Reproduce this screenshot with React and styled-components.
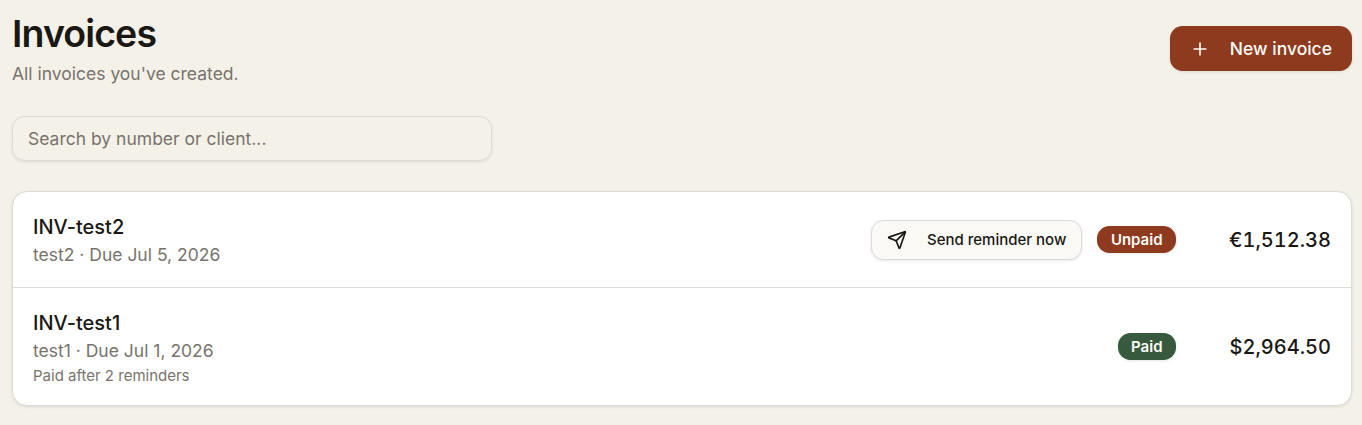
import React from 'react';
import styled, { createGlobalStyle } from 'styled-components';
import { Plus, Send } from 'lucide-react';

const theme = {
  background: '#f4f1e9',
  card: '#ffffff',
  border: '#dddbd6',
  text: '#1a1814',
  muted: '#78736c',
  rust: '#8e3a1f',
  green: '#375a3e',
};

const invoices = [
  {
    number: 'INV-test2',
    details: 'test2 · Due Jul 5, 2026',
    amount: '€1,512.38',
    paid: false,
  },
  {
    number: 'INV-test1',
    details: 'test1 · Due Jul 1, 2026',
    note: 'Paid after 2 reminders',
    amount: '$2,964.50',
    paid: true,
  },
];

const App = () => (
  <>
    <GlobalStyle />
    <Page>
      <Header>
        <div>
          <Title>Invoices</Title>
          <Subtitle>All invoices you've created.</Subtitle>
        </div>
        <PrimaryButton type="button">
          <Plus size={20} strokeWidth={2} />
          New invoice
        </PrimaryButton>
      </Header>
      <Search type="text" placeholder="Search by number or client..." />
      <List>
        {invoices.map((invoice) => (
          <Row key={invoice.number}>
            <div>
              <Number>{invoice.number}</Number>
              <Details>{invoice.details}</Details>
              {invoice.note && <Note>{invoice.note}</Note>}
            </div>
            <Actions>
              {!invoice.paid && (
                <ReminderButton type="button">
                  <Send size={20} strokeWidth={2} />
                  Send reminder now
                </ReminderButton>
              )}
              <Badge $paid={invoice.paid}>
                {invoice.paid ? 'Paid' : 'Unpaid'}
              </Badge>
              <Amount>{invoice.amount}</Amount>
            </Actions>
          </Row>
        ))}
      </List>
    </Page>
  </>
);

const GlobalStyle = createGlobalStyle`
  * {
    box-sizing: border-box;
  }
  body {
    margin: 0;
    background: ${theme.background};
    color: ${theme.text};
    font-family: Inter, sans-serif;
  }
  button, input {
    font-family: inherit;
  }
`;

const Page = styled.main`
  display: flex;
  flex-direction: column;
  gap: 30px;
  padding: 11px 10px 19px 12px;
`;

const Header = styled.header`
  display: flex;
  align-items: center;
  justify-content: space-between;
`;

const Title = styled.h1`
  margin: 0;
  font-size: 37.5px;
  font-weight: 600;
  line-height: 45px;
  letter-spacing: -0.024em;
`;

const Subtitle = styled.p`
  margin: 5px 0 0;
  color: ${theme.muted};
  font-size: 17.5px;
  line-height: 25px;
`;

const Button = styled.button`
  display: inline-flex;
  align-items: center;
  gap: 20px;
  font-weight: 500;
  white-space: nowrap;
  cursor: pointer;
`;

const PrimaryButton = styled(Button)`
  height: 45px;
  padding: 0 20px;
  border: 0;
  border-radius: 12.5px;
  background: ${theme.rust};
  color: #fdfbf7;
  font-size: 17.5px;
  box-shadow: 0 1px 3px rgba(0, 0, 0, 0.1);
`;

const ReminderButton = styled(Button)`
  height: 40px;
  padding: 0 15px;
  border: 1px solid ${theme.border};
  border-radius: 12.5px;
  background: #faf9f6;
  color: ${theme.text};
  font-size: 15px;
  box-shadow: 0 1px 3px rgba(0, 0, 0, 0.1);
`;

const Search = styled.input`
  width: 480px;
  height: 45px;
  padding: 0 15px;
  border: 1px solid ${theme.border};
  border-radius: 12.5px;
  outline: none;
  background: transparent;
  color: ${theme.text};
  font-size: 17.5px;
  box-shadow: 0 1px 3px rgba(0, 0, 0, 0.1);
  &::placeholder {
    color: ${theme.muted};
    opacity: 1;
  }
`;

const List = styled.section`
  border: 1px solid ${theme.border};
  border-radius: 15px;
  background: ${theme.card};
  box-shadow: 0 1px 3px rgba(0, 0, 0, 0.1);
`;

const Row = styled.div`
  display: flex;
  align-items: center;
  justify-content: space-between;
  padding: 20px;
  & + & {
    border-top: 1px solid ${theme.border};
  }
`;

const Number = styled.div`
  font-size: 20px;
  font-weight: 500;
  line-height: 30px;
`;

const Details = styled.div`
  color: ${theme.muted};
  font-size: 17.5px;
  line-height: 25px;
`;

const Note = styled.div`
  margin: 3px 0 -1px;
  color: ${theme.muted};
  font-size: 15px;
  line-height: 20px;
`;

const Actions = styled.div`
  display: flex;
  align-items: center;
  gap: 15px;
`;

const Badge = styled.span`
  padding: 3.5px 13.5px;
  border-radius: 12.5px;
  background: ${({ $paid }) => ($paid ? theme.green : theme.rust)};
  color: #fdfbf7;
  font-size: 15px;
  font-weight: 600;
  line-height: 20px;
  box-shadow: 0 1px 3px rgba(0, 0, 0, 0.1);
`;

const Amount = styled.div`
  width: 140px;
  text-align: right;
  font-size: 20px;
  font-weight: 500;
  line-height: 30px;
  font-variant-numeric: tabular-nums;
`;

export default App;
